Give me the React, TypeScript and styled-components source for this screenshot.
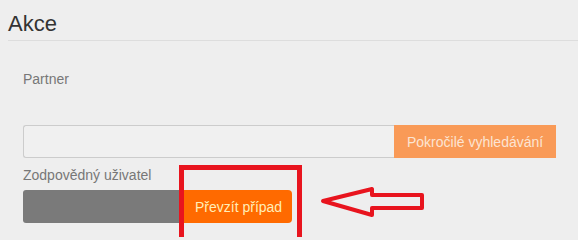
import * as React from "react";
import styled, { createGlobalStyle } from "styled-components";

const GlobalStyle = createGlobalStyle`
  html, body {
    margin: 0;
    padding: 0;
    background: #eeeeee;
  }
  body {
    font-family: "Liberation Sans", Arial, sans-serif;
  }
`;

function App() {
  return (
    <Page>
      <GlobalStyle />
      <Header>
        <Title>Akce</Title>
      </Header>

      <Body>
        <Label>Partner</Label>
        <InputGroup>
          <TextInput type="text" />
          <SearchButton type="button">Pokročilé vyhledávání</SearchButton>
        </InputGroup>

        <UserLabel>Zodpovědný uživatel</UserLabel>
        <InputGroup>
          <UserSelect />
          <TakeButton type="button">Převzít případ</TakeButton>
        </InputGroup>
      </Body>

      <Highlight />
      <Arrow width="110" height="40" viewBox="0 0 110 40">
        <polygon
          points="4,16 53,4 53,10 103,10 103,23 53,23 53,30"
          fill="none"
          stroke="#e8141e"
          strokeWidth="4"
          strokeLinejoin="round"
        />
      </Arrow>
    </Page>
  );
}

export default App;

const Page = styled.div`
  position: relative;
  width: 578px;
  height: 237px;
  overflow: hidden;
  background: #eeeeee;
`;

const Header = styled.div`
  margin-left: 8px;
  padding: 12px 0 4px;
  border-bottom: 1px solid #dddddd;
`;

const Title = styled.h2`
  margin: 0;
  font-size: 22px;
  line-height: 24px;
  font-weight: normal;
  color: #333333;
`;

const Body = styled.div`
  padding: 28px 22px 0 23px;
  display: flex;
  flex-direction: column;
`;

const Label = styled.label`
  font-size: 14px;
  line-height: 20px;
  color: #777777;
  margin-bottom: 36px;
`;

const UserLabel = styled(Label)`
  margin-top: 7px;
  margin-bottom: 5px;
`;

const InputGroup = styled.div`
  display: flex;
  height: 33px;
`;

const TextInput = styled.input`
  box-sizing: border-box;
  width: 371px;
  height: 33px;
  margin: 0;
  border: 1px solid #cccccc;
  border-right: none;
  border-radius: 3px 0 0 3px;
  background: #f0f0f0;
  outline: none;
`;

const SearchButton = styled.button`
  box-sizing: border-box;
  width: 162px;
  height: 33px;
  margin: 0;
  padding: 0 13px;
  border: none;
  background: #f99a57;
  color: #fce4d2;
  font-family: "Liberation Sans", Arial, sans-serif;
  font-size: 14px;
  white-space: nowrap;
`;

const UserSelect = styled.div`
  width: 160px;
  height: 33px;
  background: #7a7a7a;
  border-radius: 3px 0 0 3px;
`;

const TakeButton = styled.button`
  box-sizing: border-box;
  width: 109px;
  height: 33px;
  margin: 0;
  padding: 0 12px;
  border: none;
  border-radius: 0 4px 4px 0;
  background: #ff6a00;
  color: #ffeeb8;
  font-family: "Liberation Sans", Arial, sans-serif;
  font-size: 14px;
  white-space: nowrap;
`;

const Highlight = styled.div`
  position: absolute;
  left: 179px;
  top: 165px;
  width: 123px;
  height: 90px;
  box-sizing: border-box;
  border: 5px solid #e8141e;
  pointer-events: none;
`;

const Arrow = styled.svg`
  position: absolute;
  left: 319px;
  top: 185px;
  overflow: visible;
`;
